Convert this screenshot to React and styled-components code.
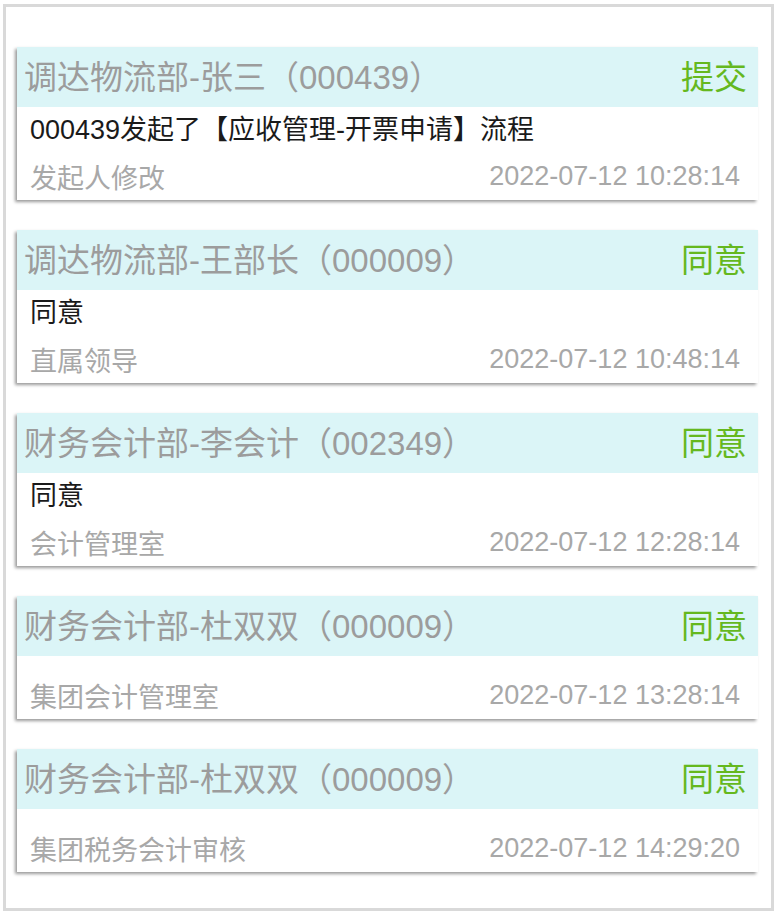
import React from "react";
import styled, { createGlobalStyle } from "styled-components";

const GlobalStyle = createGlobalStyle`
  body {
    margin: 0;
    background: #fff;
    font-family: "Liberation Sans", "Noto Sans CJK SC", sans-serif;
  }
`;

const records = [
  {
    title: "调达物流部-张三（000439）",
    status: "提交",
    comment: "000439发起了【应收管理-开票申请】流程",
    role: "发起人修改",
    time: "2022-07-12 10:28:14",
  },
  {
    title: "调达物流部-王部长（000009）",
    status: "同意",
    comment: "同意",
    role: "直属领导",
    time: "2022-07-12 10:48:14",
  },
  {
    title: "财务会计部-李会计（002349）",
    status: "同意",
    comment: "同意",
    role: "会计管理室",
    time: "2022-07-12 12:28:14",
  },
  {
    title: "财务会计部-杜双双（000009）",
    status: "同意",
    comment: "",
    role: "集团会计管理室",
    time: "2022-07-12 13:28:14",
  },
  {
    title: "财务会计部-杜双双（000009）",
    status: "同意",
    comment: "",
    role: "集团税务会计审核",
    time: "2022-07-12 14:29:20",
  },
];

export default function App() {
  return (
    <>
      <GlobalStyle />
      <Frame>
        {records.map((r, i) => (
          <Card key={i}>
            <CardHeader>
              <Title>{r.title}</Title>
              <Status>{r.status}</Status>
            </CardHeader>
            <Comment>{r.comment}</Comment>
            <MetaRow>
              <Role>{r.role}</Role>
              <Time>{r.time}</Time>
            </MetaRow>
          </Card>
        ))}
      </Frame>
    </>
  );
}

const Frame = styled.div`
  box-sizing: border-box;
  margin: 4px 3px 0 3px;
  width: 771px;
  height: 907px;
  border: 3px solid #d9d9d9;
  padding: 40px 13px 0 11px;
  display: flex;
  flex-direction: column;
  gap: 30px;
`;

const Card = styled.div`
  background: #fff;
  box-shadow: -2px 2px 3px rgba(0, 0, 0, 0.4);
`;

const CardHeader = styled.div`
  box-sizing: border-box;
  height: 60px;
  background: #dbf5f7;
  display: flex;
  align-items: center;
  justify-content: space-between;
  padding: 0 11px 5px 7px;
`;

const Title = styled.span`
  font-size: 33px;
  color: #9c9c9c;
`;

const Status = styled.span`
  font-size: 33px;
  color: #65b81e;
`;

const Comment = styled.div`
  padding: 8px 13px;
  font-size: 27px;
  line-height: 30px;
  color: #1a1a1a;
`;

const MetaRow = styled.div`
  height: 47px;
  display: flex;
  align-items: center;
  justify-content: space-between;
  padding: 0 18px 0 13px;
  font-size: 27px;
  color: #a8a8a8;
`;

const Role = styled.span``;

const Time = styled.span``;
